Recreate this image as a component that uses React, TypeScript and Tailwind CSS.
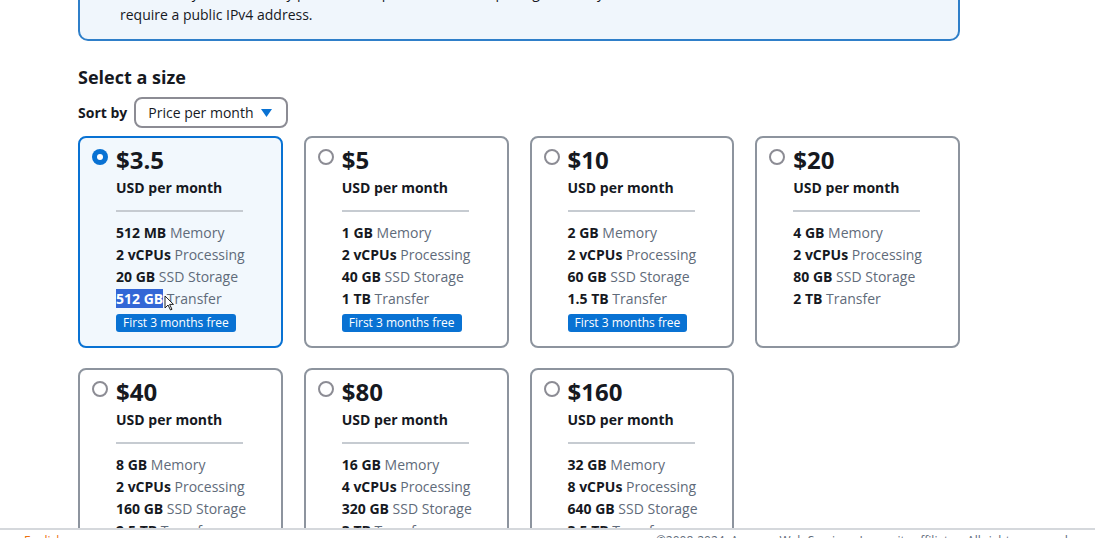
import type { ReactNode } from 'react'

type Plan = {
  price: string
  memory: string
  cpus: string
  storage: string
  transfer: string
  free?: boolean
}

const plans: Plan[] = [
  { price: '$3.5', memory: '512 MB', cpus: '2 vCPUs', storage: '20 GB', transfer: '512 GB', free: true },
  { price: '$5', memory: '1 GB', cpus: '2 vCPUs', storage: '40 GB', transfer: '1 TB', free: true },
  { price: '$10', memory: '2 GB', cpus: '2 vCPUs', storage: '60 GB', transfer: '1.5 TB', free: true },
  { price: '$20', memory: '4 GB', cpus: '2 vCPUs', storage: '80 GB', transfer: '2 TB' },
  { price: '$40', memory: '8 GB', cpus: '2 vCPUs', storage: '160 GB', transfer: '2.5 TB' },
  { price: '$80', memory: '16 GB', cpus: '4 vCPUs', storage: '320 GB', transfer: '3 TB' },
  { price: '$160', memory: '32 GB', cpus: '8 vCPUs', storage: '640 GB', transfer: '3.5 TB' },
]

function Spec({ value, label }: { value: ReactNode; label: string }) {
  return (
    <div className="leading-[22px] text-[14px] whitespace-nowrap">
      <span className="font-bold text-[#16191f]">{value}</span>{' '}
      <span className="text-[#5f6b7a]">{label}</span>
    </div>
  )
}

function Radio({ checked }: { checked: boolean }) {
  return checked ? (
    <span className="mt-[3px] flex h-4 w-4 shrink-0 items-center justify-center rounded-full bg-[#0972d3]">
      <span className="h-[6px] w-[6px] rounded-full bg-white" />
    </span>
  ) : (
    <span className="mt-[3px] h-4 w-4 shrink-0 rounded-full border-2 border-[#8c8c94] bg-white" />
  )
}

function PlanCard({ plan, selected }: { plan: Plan; selected: boolean }) {
  return (
    <div
      className={`relative flex gap-2 rounded-[8px] border-2 pl-3 pt-[8px] pb-[14px] ${
        selected ? 'border-[#0972d3] bg-[#f2f8fd]' : 'border-[#8d949e] bg-white'
      }`}
    >
      <Radio checked={selected} />
      <div className="flex flex-col">
        <div className="text-[24px] font-bold leading-[28px] text-[#16191f]">{plan.price}</div>
        <div className="mt-1 text-[14px] font-bold leading-5 text-[#16191f]">USD per month</div>
        <div className="mt-3 h-[2px] w-[127px] bg-[#c6cbd1]" />
        <div className="mt-[10px]">
          <Spec value={plan.memory} label="Memory" />
          <Spec value={plan.cpus} label="Processing" />
          <Spec value={plan.storage} label="SSD Storage" />
          <Spec
            value={
              selected ? (
                <span className="bg-[#3367d6] text-white">{plan.transfer}</span>
              ) : (
                plan.transfer
              )
            }
            label="Transfer"
          />
        </div>
        {plan.free && (
          <div className="mt-1 self-start rounded-[3px] bg-[#0972d3] px-[7px] text-[12px] leading-[18px] text-white">
            First 3 months free
          </div>
        )}
      </div>
      {selected && (
        <svg
          className="absolute left-[84px] top-[157px]"
          width="10"
          height="16"
          viewBox="0 0 10 16"
        >
          <path d="M1 1 L1 13 L4 10 L6.5 15 L8 14.3 L5.6 9.4 L9.5 9.4 Z" fill="white" stroke="#222" strokeWidth="1" />
        </svg>
      )}
    </div>
  )
}

export default function App() {
  return (
    <div className="relative h-[538px] overflow-hidden bg-white font-['Open_Sans',sans-serif] text-[#16191f]">
      <div className="ml-[78px] w-[882px]">
        <div className="-mt-[32px] rounded-[10px] border-2 border-[#2f7fc9] bg-[#f0f6fc] pb-[13px] pl-10 pt-3 text-[14px] leading-[22px]">
          <p>Save money with IPv6-only plans. These plans have lower pricing, and they work well for instances that don't</p>
          <p>require a public IPv4 address.</p>
        </div>

        <h2 className="mt-6 text-[18px] font-bold leading-6">Select a size</h2>

        <div className="mt-2 flex items-center gap-[7px]">
          <span className="text-[14px] font-bold">Sort by</span>
          <div className="flex h-[31px] w-[154px] items-center justify-between rounded-[8px] border-2 border-[#8c8c94] pl-[12px] pr-[14px] text-[14px]">
            <span>Price per month</span>
            <svg width="11" height="8" viewBox="0 0 11 8">
              <path d="M0 0 H11 L5.5 8 Z" fill="#0972d3" />
            </svg>
          </div>
        </div>

        <div className="mt-[8px] grid grid-cols-4 gap-x-[21px] gap-y-5">
          {plans.map((p, i) => (
            <PlanCard key={p.price} plan={p} selected={i === 0} />
          ))}
        </div>
      </div>

      <div className="absolute inset-x-0 top-[528px] h-10 border-t-2 border-[#d5d8dc] bg-white pt-[3px] text-[12px] leading-4">
        <div className="flex justify-between whitespace-nowrap px-6">
          <span className="text-[#ec7211]">English</span>
          <span className="text-[#5f6b7a]">
            ©2008-2024, Amazon Web Services, Inc. or its affiliates. All rights reserved.
          </span>
        </div>
      </div>
    </div>
  )
}
